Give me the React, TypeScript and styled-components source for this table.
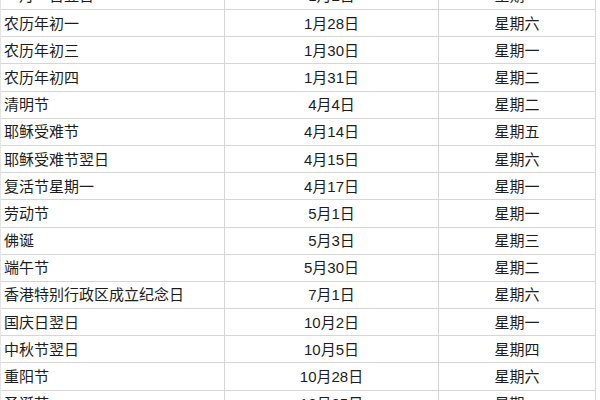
import styled, { createGlobalStyle } from "styled-components";

const GlobalStyle = createGlobalStyle`
  html, body {
    margin: 0;
    padding: 0;
    background: #ffffff;
    overflow: hidden;
  }
`;

const Wrapper = styled.div`
  width: 600px;
  height: 400px;
  overflow: hidden;
  background: #ffffff;
  font-family: "Liberation Sans", "Noto Sans CJK SC", sans-serif;
  font-size: 15px;
  color: #1c1c1c;
`;

const Sheet = styled.div`
  display: flex;
  flex-direction: column;
  width: 596px;
  margin-top: -17.2px;
  border-left: 1px solid #e4e4e4;
  box-sizing: border-box;
`;

const Row = styled.div`
  display: grid;
  grid-template-columns: 224px 214px 157px;
  height: 27.2px;
  box-sizing: border-box;
  border-bottom: 1px solid #d6d6d6;
`;

const Cell = styled.div<{ align?: "left" | "center" }>`
  display: flex;
  align-items: center;
  justify-content: ${(props) => (props.align === "left" ? "flex-start" : "center")};
  padding-left: ${(props) => (props.align === "left" ? "3px" : "0")};
  border-right: 1px solid #d6d6d6;
  white-space: nowrap;
  line-height: 1;
`;

const holidays = [
  ["一月一日翌日", "1月2日", "星期一"],
  ["农历年初一", "1月28日", "星期六"],
  ["农历年初三", "1月30日", "星期一"],
  ["农历年初四", "1月31日", "星期二"],
  ["清明节", "4月4日", "星期二"],
  ["耶稣受难节", "4月14日", "星期五"],
  ["耶稣受难节翌日", "4月15日", "星期六"],
  ["复活节星期一", "4月17日", "星期一"],
  ["劳动节", "5月1日", "星期一"],
  ["佛诞", "5月3日", "星期三"],
  ["端午节", "5月30日", "星期二"],
  ["香港特别行政区成立纪念日", "7月1日", "星期六"],
  ["国庆日翌日", "10月2日", "星期一"],
  ["中秋节翌日", "10月5日", "星期四"],
  ["重阳节", "10月28日", "星期六"],
  ["圣诞节", "12月25日", "星期一"],
];

function App() {
  return (
    <Wrapper>
      <GlobalStyle />
      <Sheet>
        {holidays.map(([name, date, day]) => (
          <Row key={name}>
            <Cell align="left">{name}</Cell>
            <Cell>{date}</Cell>
            <Cell>{day}</Cell>
          </Row>
        ))}
      </Sheet>
    </Wrapper>
  );
}
export default App;
